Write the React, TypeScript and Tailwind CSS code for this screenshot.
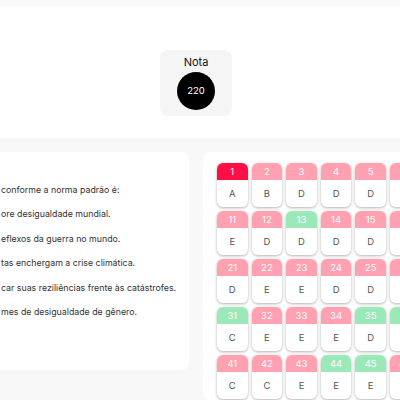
import React from "react";

type Tile = { n: number; c: "r" | "p" | "g"; a: string };

const rows: Tile[][] = [
  [
    { n: 1, c: "r", a: "A" },
    { n: 2, c: "p", a: "B" },
    { n: 3, c: "p", a: "D" },
    { n: 4, c: "p", a: "D" },
    { n: 5, c: "p", a: "D" },
    { n: 6, c: "p", a: "C" },
    { n: 7, c: "p", a: "A" },
  ],
  [
    { n: 11, c: "p", a: "E" },
    { n: 12, c: "p", a: "D" },
    { n: 13, c: "g", a: "D" },
    { n: 14, c: "p", a: "D" },
    { n: 15, c: "p", a: "D" },
    { n: 16, c: "p", a: "E" },
    { n: 17, c: "p", a: "B" },
  ],
  [
    { n: 21, c: "p", a: "D" },
    { n: 22, c: "p", a: "E" },
    { n: 23, c: "p", a: "E" },
    { n: 24, c: "p", a: "D" },
    { n: 25, c: "p", a: "D" },
    { n: 26, c: "p", a: "C" },
    { n: 27, c: "p", a: "A" },
  ],
  [
    { n: 31, c: "g", a: "C" },
    { n: 32, c: "p", a: "E" },
    { n: 33, c: "p", a: "E" },
    { n: 34, c: "p", a: "E" },
    { n: 35, c: "g", a: "D" },
    { n: 36, c: "g", a: "B" },
    { n: 37, c: "p", a: "A" },
  ],
  [
    { n: 41, c: "p", a: "C" },
    { n: 42, c: "p", a: "C" },
    { n: 43, c: "p", a: "E" },
    { n: 44, c: "g", a: "E" },
    { n: 45, c: "g", a: "E" },
    { n: 46, c: "p", a: "D" },
    { n: 47, c: "p", a: "C" },
  ],
];

function TileView({ t }: { t: Tile }) {
  const head =
    t.c === "r" ? "bg-[#ff0f45]" : t.c === "g" ? "bg-[#9be8b9]" : "bg-[#ffa1b1]";
  return (
    <div className="w-[30.6px] h-[44px] shrink-0 rounded-[6px] bg-white shadow-[0_1px_3px_rgba(0,0,0,0.3)] overflow-hidden flex flex-col">
      <div className={`${head} h-[17px] flex items-center justify-center text-[9.5px] text-white leading-none`}>
        {t.n}
      </div>
      <div className="flex-1 flex items-center justify-center text-[9.5px] text-[#555] leading-none">
        {t.a}
      </div>
    </div>
  );
}

export default function App() {
  const lines = [
    "ore desigualdade mundial.",
    "eflexos da guerra no mundo.",
    "tas enchergam a crise climática.",
    "car suas reziliências frente às catástrofes.",
    "mes de desigualdade de gênero.",
  ];
  return (
    <div
      className="w-[400px] h-[400px] overflow-hidden bg-white"
      style={{ fontFamily: "Inter, 'Liberation Sans', Arial, sans-serif" }}
    >
      <div className="h-[6px] bg-[#f9f9f9]" />
      <div className="h-[132px] flex justify-center pr-[8px] pt-[44px]">
        <div className="w-[72px] h-[66px] rounded-[8px] bg-[#f5f5f5] flex flex-col items-center pt-[6px]">
          <div className="text-[11px] text-[#111] leading-[13px]">Nota</div>
          <div className="mt-[3px] w-[38px] h-[38px] rounded-full bg-black flex items-center justify-center text-[9.5px] text-white">
            220
          </div>
        </div>
      </div>
      <div className="h-[262px] bg-[#f8f8f8] pt-[14px] flex gap-[14px]">
        <div className="ml-[-20px] w-[209px] h-[218px] shrink-0 rounded-[8px] bg-white pl-[21px] pt-[32px] text-[8.8px] text-[#333] leading-[12px] whitespace-nowrap">
          <div>conforme a norma padrão é:</div>
          <div className="mt-[12px] flex flex-col gap-[12.5px]">
            {lines.map((l) => (
              <div key={l}>{l}</div>
            ))}
          </div>
        </div>
        <div className="w-[300px] shrink-0 rounded-[8px] bg-white pl-[14px] pt-[11px] flex flex-col gap-[4px]">
          {rows.map((r, i) => (
            <div key={i} className="flex gap-[4px]">
              {r.map((t) => (
                <TileView key={t.n} t={t} />
              ))}
            </div>
          ))}
        </div>
      </div>
    </div>
  );
}
